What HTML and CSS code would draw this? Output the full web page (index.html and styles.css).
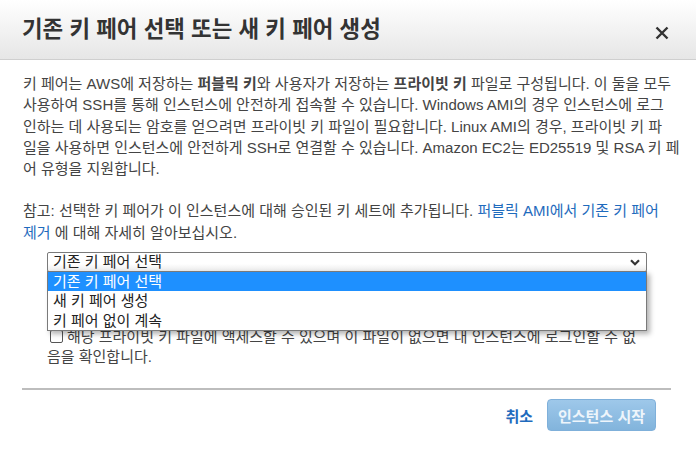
FILE: index.html
```html
<!DOCTYPE html>
<html lang="ko">
<head>
<meta charset="utf-8">
<link rel="stylesheet" href="styles.css">
</head>
<body>
<div class="modal">
  <header class="modal-header">
    <h1 class="title">기존 키 페어 선택 또는 새 키 페어 생성</h1>
    <button class="close" aria-label="닫기">
      <svg width="14" height="14" viewBox="0 0 14 14"><path d="M1.5 1.5 L12.5 12.5 M12.5 1.5 L1.5 12.5" stroke="#333" stroke-width="2.4" fill="none"/></svg>
    </button>
  </header>
  <div class="modal-body">
    <p class="intro">키 페어는 AWS에 저장하는 <b>퍼블릭 키</b>와 사용자가 저장하는 <b>프라이빗 키</b> 파일로 구성됩니다. 이 둘을 모두<br>사용하여 SSH를 통해 인스턴스에 안전하게 접속할 수 있습니다. Windows AMI의 경우 인스턴스에 로그<br>인하는 데 사용되는 암호를 얻으려면 프라이빗 키 파일이 필요합니다. Linux AMI의 경우, 프라이빗 키 파<br>일을 사용하면 인스턴스에 안전하게 SSH로 연결할 수 있습니다. Amazon EC2는 ED25519 및 RSA 키 페<br>어 유형을 지원합니다.</p>
    <p class="note">참고: 선택한 키 페어가 이 인스턴스에 대해 승인된 키 세트에 추가됩니다. <a class="link" href="#">퍼블릭 AMI에서 기존 키 페어<br>제거</a> 에 대해 자세히 알아보십시오.</p>
    <div class="select-wrap">
      <div class="select">
        <span>기존 키 페어 선택</span>
        <svg class="chev" width="10" height="7" viewBox="0 0 10 7"><path d="M1 1.2 L5 5.2 L9 1.2" stroke="#333" stroke-width="2.2" fill="none"/></svg>
      </div>
      <ul class="options">
        <li class="opt active">기존 키 페어 선택</li>
        <li class="opt">새 키 페어 생성</li>
        <li class="opt">키 페어 없이 계속</li>
      </ul>
    </div>
    <label class="ack"><span class="checkbox"></span>해당 프라이빗 키 파일에 액세스할 수 있으며 이 파일이 없으면 내 인스턴스에 로그인할 수 없<br>음을 확인합니다.</label>
  </div>
  <footer class="modal-footer">
    <a class="cancel" href="#">취소</a>
    <button class="launch">인스턴스 시작</button>
  </footer>
</div>
</body>
</html>
```

FILE: styles.css
```css
html, body {
  margin: 0;
  padding: 0;
  background: #fff;
}
body {
  font-family: "Liberation Sans", Arial, "Noto Sans CJK KR", sans-serif;
  color: #444;
  width: 696px;
  height: 452px;
  overflow: hidden;
}
.modal {
  display: flex;
  flex-direction: column;
}
.modal-header {
  height: 59px;
  border-bottom: 1px solid #cfcfcf;
  background: linear-gradient(#ffffff, #e6e6e6);
  display: flex;
  align-items: center;
  justify-content: space-between;
  padding: 0 27px 0 22px;
}
.title {
  margin: 0;
  font-size: 22.4px;
  line-height: 28px;
  font-weight: bold;
  color: #333;
  padding-top: 1px;
}
.close {
  border: 0;
  background: none;
  padding: 0;
  margin-top: 6px;
  display: flex;
}
.modal-body {
  padding: 13px 20px 0 23px;
  font-size: 15px;
  line-height: 21.3px;
}
.intro {
  margin: 0;
  white-space: nowrap;
}
.note {
  margin: 21px 0 0;
  white-space: nowrap;
}
.link {
  color: #1f6bbd;
  text-decoration: none;
}
.select-wrap {
  position: relative;
  margin: 9px 0 0 24px;
  width: 600px;
}
.select {
  height: 18px;
  border: 1px solid #7a7a7a;
  border-radius: 2px;
  background: linear-gradient(#ffffff 60%, #ececec);
  display: flex;
  align-items: center;
  justify-content: space-between;
  padding: 0 5px 0 5px;
  font-size: 15px;
  color: #222;
  line-height: 18px;
}
.chev {
  margin-right: 1px;
}
.options {
  position: absolute;
  left: 0;
  top: 19px;
  width: 598px;
  margin: 0;
  padding: 0;
  list-style: none;
  background: #fff;
  border: 1px solid #7a7a7a;
  box-shadow: 3px 3px 5px rgba(0, 0, 0, 0.3);
  z-index: 2;
}
.opt {
  height: 19.3px;
  line-height: 19.3px;
  padding-left: 5px;
  font-size: 15px;
  color: #222;
}
.opt.active {
  background: #1e90ff;
  color: #fff;
}
.ack {
  display: block;
  margin: 55px 0 0 24px;
  line-height: 20px;
  color: #444;
  white-space: nowrap;
}
.checkbox {
  display: inline-block;
  width: 11px;
  height: 11px;
  border: 1px solid #555;
  border-radius: 2px;
  margin: 0 4px 0 3px;
  vertical-align: -1px;
  background: #fff;
}
.modal-footer {
  margin: 21px 25px 0 22px;
  border-top: 2px solid #bdbdbd;
  display: flex;
  justify-content: flex-end;
  align-items: center;
  gap: 14px;
  padding: 9px 15px 0 0;
}
.cancel {
  color: #1f6bbd;
  text-decoration: none;
  font-size: 15px;
  font-weight: bold;
}
.launch {
  width: 109px;
  height: 32px;
  border: 1px solid #7fb0da;
  border-radius: 4px;
  background: linear-gradient(#9ec8ea, #82b4dc);
  color: #eef5fb;
  font-family: inherit;
  font-size: 15px;
  font-weight: bold;
  padding: 0;
}
```
